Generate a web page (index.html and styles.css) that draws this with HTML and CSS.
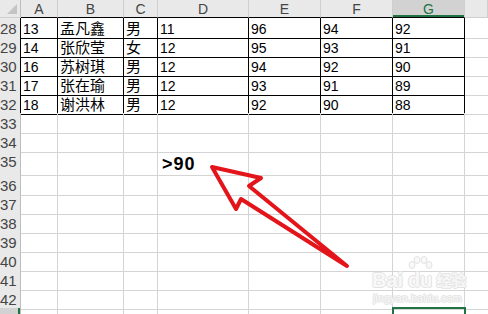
FILE: index.html
```html
<!DOCTYPE html>
<html lang="zh-CN">
<head>
  <meta charset="UTF-8">
  <meta name="viewport" content="width=device-width, initial-scale=1.0">
  <title>成绩表</title>
  <link rel="stylesheet" href="styles.css">
</head>
<body>
  <div class="sheet">
    <div class="row head">
      <div class="cell corner"></div>
      <div class="cell col edge">A</div>
      <div class="cell col edge">B</div>
      <div class="cell col edge">C</div>
      <div class="cell col edge">D</div>
      <div class="cell col edge">E</div>
      <div class="cell col edge">F</div>
      <div class="cell col edge selected">G</div>
      <div class="cell col"></div>
    </div>
    <div id="rows"></div>

    <svg class="arrow" width="488" height="314" viewBox="0 0 488 314">
      <path d="M212 167 L261 178 L249 186 L347 266 L241 199 L236 209 Z" />
    </svg>

    <div class="watermark">
      <div class="wm-logo">
        <span>Bai</span>
        <span class="wm-paw">
          <svg width="26" height="14" viewBox="0 0 26 14">
            <ellipse cx="5" cy="9" rx="3" ry="3.5" />
            <ellipse cx="10" cy="4" rx="3" ry="3.5" />
            <ellipse cx="17" cy="4" rx="3" ry="3.5" />
            <ellipse cx="22" cy="9" rx="3" ry="3.5" />
          </svg>
          <span>du</span>
        </span>
        <span class="wm-cn">经验</span>
      </div>
      <div class="wm-url">jingyan.baidu.com</div>
    </div>
  </div>

  <script>
    const students = {
      28: ['13', '孟凡鑫', '男', '11', '96', '94', '92'],
      29: ['14', '张欣莹', '女', '12', '95', '93', '91'],
      30: ['16', '苏树琪', '男', '12', '94', '92', '90'],
      31: ['17', '张在瑜', '男', '12', '93', '91', '89'],
      32: ['18', '谢洪林', '男', '12', '92', '90', '88']
    };
    const rowsBox = document.getElementById('rows');

    for (let n = 28; n <= 43; n++) {
      const row = document.createElement('div');
      row.className = 'row';
      if (n === 35) row.classList.add('tall');

      const num = document.createElement('div');
      num.className = 'cell num';
      num.textContent = n;
      if (students[n]) num.classList.add('edge');
      if (n === 43) num.classList.add('current');
      row.appendChild(num);

      for (let c = 0; c < 8; c++) {
        const cell = document.createElement('div');
        cell.className = 'cell';
        if (students[n] && c < 7) {
          cell.classList.add('data');
          cell.textContent = students[n][c];
          if (c === 1 || c === 2) cell.classList.add('cjk');
        }
        if (n === 35 && c === 3) {
          cell.classList.add('note');
          cell.textContent = '>90';
        }
        if (n === 43 && c === 6) cell.classList.add('active');
        if (c === 7) cell.classList.add('last');
        row.appendChild(cell);
      }

      rowsBox.appendChild(row);
    }
  </script>
</body>
</html>
```

FILE: styles.css
```css
* {
  box-sizing: border-box;
}
body {
  margin: 0;
  background-color: #fff;
  color: #000;
  font-family: "Liberation Sans", "Noto Sans CJK SC", sans-serif;
  font-size: 14px;
  overflow: hidden;
}
.sheet {
  position: relative;
  width: 488px;
  height: 314px;
  overflow: hidden;
}
.row {
  display: grid;
  grid-template-columns: 21px 37px 66px 34px 91px 72px 72px 72px 1fr;
  height: 19px;
}
.row.head {
  height: 18px;
}
.row.tall {
  height: 24px;
}
.cell {
  position: relative;
  padding: 2px 2px 0;
  line-height: 18px;
  white-space: nowrap;
  border-right: 1px solid #d4d4d4;
  border-bottom: 1px solid #d4d4d4;
}
.cell.last {
  border-right: none;
}
.cell.cjk {
  font-size: 15px;
}
.cell.data {
  border-right-color: #000;
  border-bottom-color: #000;
}

/* column and row headers */
.corner,
.col,
.num {
  background-color: #e9e9e9;
  color: #444;
  border-right-color: #cfcfcf;
  border-bottom-color: #cfcfcf;
}
.corner {
  border-right-color: #bdbdbd;
}
.corner::after {
  content: "";
  position: absolute;
  right: 3px;
  bottom: 3px;
  border-left: 10px solid transparent;
  border-bottom: 10px solid #c4c4c4;
}
.col {
  font-size: 14px;
  text-align: center;
  line-height: 16px;
  padding-top: 1px;
}
.col.edge {
  border-bottom-color: #000;
}
.col.selected {
  background-color: #d2d2d2;
  color: #217346;
  box-shadow: inset 0 -2px 0 #217346;
}
.num {
  font-size: 15px;
  text-align: right;
  padding-right: 4px;
  padding-left: 0;
  border-right-color: #bdbdbd;
}
.num.edge {
  border-right-color: #000;
}
.num.current {
  background-color: #d2d2d2;
  box-shadow: inset -2px 0 0 #217346;
}

.cell.note {
  padding: 2px 4px 0;
  line-height: 22px;
  font-size: 18px;
  font-weight: bold;
  letter-spacing: 1px;
}
.cell.active::after {
  content: "";
  position: absolute;
  top: -1px;
  left: -1px;
  right: -2px;
  bottom: -2px;
  border: 2px solid #217346;
}

/* hand-drawn pointer */
.arrow {
  position: absolute;
  top: 0;
  left: 0;
  pointer-events: none;
}
.arrow path {
  fill: none;
  stroke: #e4141b;
  stroke-width: 4;
  stroke-linejoin: round;
  stroke-linecap: round;
}

/* site stamp */
.watermark {
  position: absolute;
  left: 372px;
  top: 258px;
  color: #f8f8f8;
  text-shadow: 1px 0 0 #e3e3e3, -1px 0 0 #e3e3e3, 0 1px 0 #e3e3e3, 0 -1px 0 #e3e3e3;
  pointer-events: none;
}
.wm-logo {
  display: flex;
  align-items: flex-end;
  font-size: 20px;
  font-weight: bold;
  line-height: 20px;
  height: 32px;
}
.wm-paw {
  display: flex;
  flex-direction: column;
  align-items: center;
  margin-left: 4px;
}
.wm-paw svg ellipse {
  fill: #f8f8f8;
  stroke: #e3e3e3;
  stroke-width: 1;
}
.wm-cn {
  font-family: "Noto Sans CJK SC", sans-serif;
  font-size: 15px;
  margin-left: 3px;
}
.wm-url {
  font-size: 11px;
  line-height: 12px;
  margin-top: 2px;
  margin-left: 1px;
}
```
